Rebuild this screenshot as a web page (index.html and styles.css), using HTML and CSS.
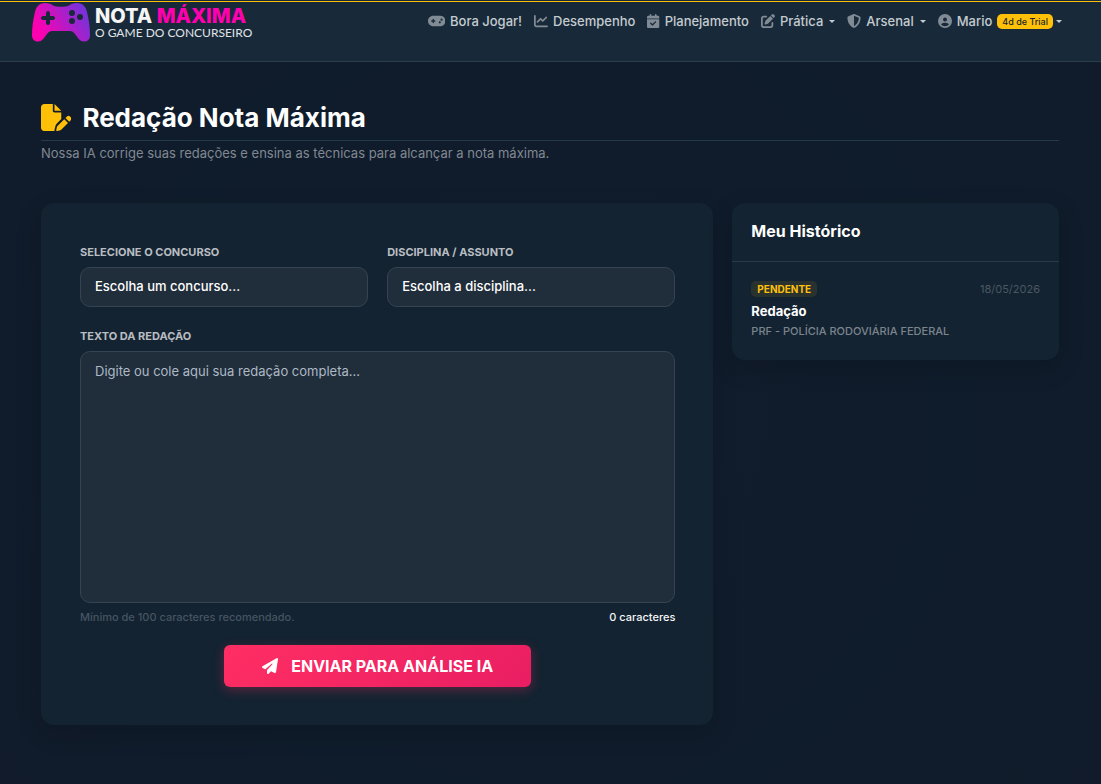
FILE: index.html
```html
<!DOCTYPE html>
<html lang="pt-BR">
<head>
  <meta charset="UTF-8">
  <meta name="viewport" content="width=device-width, initial-scale=1">
  <title>Redação Nota Máxima</title>
  <link rel="stylesheet" href="styles.css">
</head>
<body>

  <header class="navbar">
    <a class="brand" href="#">
      <svg class="brand-icon" viewBox="0 0 58 39" aria-hidden="true">
        <defs>
          <linearGradient id="logoGrad" x1="0" y1="0.7" x2="1" y2="0.3">
            <stop offset="0.1" stop-color="#ff00b0"/>
            <stop offset="1" stop-color="#6f35dc"/>
          </linearGradient>
        </defs>
        <path fill="url(#logoGrad)" d="M13 0C17 0 19 1 22 3C24 4 34 4 36 3C39 1 41 0 45 0C51 0 54 4 55 9C57 17 58 25 58 32C58 36 56 38.500 52 38.500C48 38.500 46 35 43 31C41.500 29 40 28 38 28H20C18 28 16.500 29 15 31C12 35 10 38.500 6 38.500C2 38.500 0 36 0 32C0 25 1 17 3 9C4 4 7 0 13 0Z"/>
        <g fill="#182a39">
          <path d="M14.500 10a1.500 1.500 0 0 1 3 0V13.500h3.500a1.500 1.500 0 0 1 0 3h-3.500v3.500a1.500 1.500 0 0 1-3 0v-3.500h-3.500a1.500 1.500 0 0 1 0-3h3.500z" stroke="#182a39"/>
          <circle cx="40" cy="10" r="3"/>
          <circle cx="40" cy="18" r="3"/>
          <circle cx="48" cy="14" r="3"/>
        </g>
      </svg>
      <span class="brand-text">
        <span class="brand-name">NOTA <span class="pink">MÁXIMA</span></span>
        <span class="brand-sub">O GAME DO CONCURSEIRO</span>
      </span>
    </a>

    <nav class="nav">
      <a class="nav-link" href="#">
        <svg class="icon" viewBox="0 0 640 512"><path d="M192 64C86 64 0 150 0 256S86 448 192 448H448c106 0 192-86 192-192s-86-192-192-192H192zM496 168a40 40 0 1 1 0 80 40 40 0 1 1 0-80zM392 304a40 40 0 1 1 80 0 40 40 0 1 1 -80 0zM168 200c0-13.3 10.7-24 24-24s24 10.7 24 24v32h32c13.3 0 24 10.7 24 24s-10.7 24-24 24H216v32c0 13.3-10.7 24-24 24s-24-10.7-24-24V280H136c-13.3 0-24-10.7-24-24s10.7-24 24-24h32V200z"/></svg>
        Bora Jogar!
      </a>
      <a class="nav-link" href="#">
        <svg class="icon" viewBox="0 0 512 512"><path d="M64 64c0-17.7-14.3-32-32-32S0 46.3 0 64V400c0 44.2 35.8 80 80 80H480c17.7 0 32-14.3 32-32s-14.3-32-32-32H80c-8.8 0-16-7.2-16-16V64zm406.6 86.6c12.5-12.5 12.5-32.8 0-45.3s-32.8-12.5-45.3 0L320 210.7l-57.4-57.4c-12.5-12.5-32.8-12.5-45.3 0l-112 112c-12.5 12.5-12.5 32.8 0 45.3s32.8 12.5 45.3 0L240 221.3l57.4 57.4c12.5 12.5 32.8 12.5 45.3 0l128-128z"/></svg>
        Desempenho
      </a>
      <a class="nav-link" href="#">
        <svg class="icon" viewBox="0 0 448 512"><path d="M128 0c17.7 0 32 14.3 32 32V64H288V32c0-17.7 14.3-32 32-32s32 14.3 32 32V64h48c26.5 0 48 21.5 48 48v48H0V112C0 85.5 21.5 64 48 64H96V32c0-17.7 14.3-32 32-32zM0 192H448V464c0 26.5-21.5 48-48 48H48c-26.5 0-48-21.5-48-48V192zM329 305c9.4-9.4 9.4-24.6 0-33.9s-24.6-9.4-33.9 0l-95 95-47-47c-9.4-9.4-24.6-9.4-33.9 0s-9.4 24.6 0 33.9l64 64c9.4 9.4 24.6 9.4 33.9 0L329 305z"/></svg>
        Planejamento
      </a>
      <a class="nav-link dropdown" href="#">
        <svg class="icon" viewBox="0 0 512 512"><path d="M471.6 21.7c-21.9-21.9-57.3-21.9-79.2 0L362.3 51.7l97.9 97.9 30.1-30.1c21.9-21.9 21.9-57.3 0-79.2L471.6 21.7zm-299.2 220c-6.1 6.1-10.8 13.6-13.5 21.9l-29.6 88.8c-2.9 8.6-.6 18.1 5.8 24.6s15.9 8.7 24.6 5.8l88.8-29.6c8.2-2.7 15.7-7.4 21.9-13.5L437.7 172.3 339.7 74.3 172.4 241.7zM96 64C43 64 0 107 0 160V416c0 53 43 96 96 96H352c53 0 96-43 96-96V320c0-17.7-14.3-32-32-32s-32 14.3-32 32v96c0 17.7-14.3 32-32 32H96c-17.7 0-32-14.3-32-32V160c0-17.7 14.3-32 32-32h96c17.7 0 32-14.3 32-32s-14.3-32-32-32H96z"/></svg>
        Prática
      </a>
      <a class="nav-link dropdown" href="#">
        <svg class="icon" viewBox="0 0 512 512"><path d="M256 0c4.6 0 9.2 1 13.4 2.9L457.7 82.8c22 9.3 38.4 31 38.3 57.2c-.5 99.2-41.3 280.7-213.6 363.2c-16.7 8-36.1 8-52.8 0C57.3 420.7 16.5 239.2 16 140c-.1-26.2 16.3-47.9 38.3-57.2L242.7 2.9C246.8 1 251.4 0 256 0zm0 66.8V444.8C394 378 431.1 230.1 432 141.4L256 66.8l0 0z"/></svg>
        Arsenal
      </a>
      <a class="nav-link dropdown user" href="#">
        <svg class="icon" viewBox="0 0 512 512"><path d="M399 384.2C376.9 345.8 335.4 320 288 320H224c-47.4 0-88.9 25.8-111 64.2c35.2 39.2 86.2 63.8 143 63.8s107.8-24.7 143-63.8zM0 256a256 256 0 1 1 512 0A256 256 0 1 1 0 256zm256 16a72 72 0 1 0 0-144 72 72 0 1 0 0 144z"/></svg>
        Mario <span class="trial">4d de Trial</span>
      </a>
    </nav>
  </header>

  <main class="container">
    <div class="page-header">
      <h1>
        <svg class="title-icon" viewBox="0 0 576 512" aria-hidden="true"><path d="M0 64C0 28.7 28.7 0 64 0H224V128c0 17.7 14.3 32 32 32H384V285.7l-86.8 86.8c-10.3 10.3-17.5 23.1-21 37.2l-18.7 74.9c-2.3 9.2-1.8 18.8 1.3 27.5H64c-35.3 0-64-28.7-64-64V64zm384 64H256V0L384 128zM549.8 235.7l14.4 14.4c15.6 15.6 15.6 40.9 0 56.600l-29.4 29.4-71-71 29.4-29.4c15.6-15.6 40.9-15.6 56.6 0zM311.9 417L441.1 287.8l71 71L382.9 487.9c-4.1 4.1-9.2 7-14.9 8.4l-60.1 15c-5.5 1.4-11.2-.2-15.2-4.2s-5.6-9.7-4.2-15.2l15-60.1c1.4-5.6 4.3-10.8 8.4-14.9z"/></svg>
        Redação Nota Máxima
      </h1>
    </div>
    <p class="subtitle">Nossa IA corrige suas redações e ensina as técnicas para alcançar a nota máxima.</p>

    <div class="row">
      <form class="card form-card">
        <div class="fields">
          <div class="field">
            <label for="concurso">Selecione o concurso</label>
            <select id="concurso">
              <option>Escolha um concurso...</option>
            </select>
          </div>
          <div class="field">
            <label for="disciplina">Disciplina / Assunto</label>
            <select id="disciplina">
              <option>Escolha a disciplina...</option>
            </select>
          </div>
        </div>

        <div class="field">
          <label for="texto">Texto da redação</label>
          <textarea id="texto" placeholder="Digite ou cole aqui sua redação completa..."></textarea>
          <div class="hint">
            <span>Mínimo de 100 caracteres recomendado.</span>
            <span class="count"><span id="contador">0</span> caracteres</span>
          </div>
        </div>

        <button class="btn-send" type="button">
          <svg class="send-icon" viewBox="0 0 512 512" aria-hidden="true"><path d="M498.1 5.6c10.1 7 15.4 19.1 13.5 31.2l-64 416c-1.5 9.7-7.4 18.2-16 23s-18.9 5.4-28 1.6L284 427.7l-68.5 74.1c-8.9 9.7-22.9 12.9-35.2 8.1S160 493.2 160 480V396.4c0-4 1.5-7.8 4.2-10.7L331.8 202.8c5.8-6.3 5.6-16-.4-22s-15.7-6.4-22-.7L106 360.8 17.7 316.6C7.1 311.3 .3 300.7 0 288.9s5.9-22.8 16.1-28.7l448-256c10.7-6.1 23.9-5.5 34 1.4z"/></svg>
          ENVIAR PARA ANÁLISE IA
        </button>
      </form>

      <aside class="card history">
        <h2>Meu Histórico</h2>
        <a class="history-item" href="#">
          <span class="history-top">
            <span class="status">PENDENTE</span>
            <span class="date">18/05/2026</span>
          </span>
          <span class="history-title">Redação</span>
          <span class="history-sub">PRF - POLÍCIA RODOVIÁRIA FEDERAL</span>
        </a>
      </aside>
    </div>
  </main>

  <script>
    const texto = document.getElementById("texto");
    texto.addEventListener("input", () => {
      document.getElementById("contador").textContent = texto.value.length;
    });
  </script>

</body>
</html>
```
FILE: styles.css
```css
* { box-sizing: border-box; }
body {
  margin: 0;
  min-height: 100vh;
  font-family: Inter, sans-serif;
  font-size: 13px;
  line-height: 20px;
  color: #fff;
  background: radial-gradient(circle at 50% 52%, #121c2d 0, #0f1c2b 60%, #111b2b 100%);
}
a { color: inherit; text-decoration: none; }

/* navbar */
.navbar {
  display: flex;
  justify-content: space-between;
  align-items: flex-start;
  height: 62px;
  padding: 0 39px 0 32px;
  background: linear-gradient(#ffc107, #ffc107) 0 1px / 100% 1px no-repeat #182a39;
  border-bottom: 1px solid #2a3e4e;
}
.brand { display: flex; gap: 5px; padding-top: 3px; }
.brand-icon { width: 58px; height: 39px; }
.brand-text { display: flex; flex-direction: column; padding-top: 1px; }
.brand-name { font-size: 20px; font-weight: 800; line-height: 24px; color: #f5f5f5; }
.pink { color: #ff00b0; }
.brand-sub { font-family: Lato, sans-serif; font-size: 12px; line-height: 10px; color: #e0e4e8; }

.nav { display: flex; gap: 12px; padding-top: 11px; }
.nav-link { display: flex; align-items: center; gap: 5px; font-weight: 500; color: #c5cad0; white-space: nowrap; }
.icon { height: 14px; fill: #818b95; }
.dropdown::after {
  content: "";
  margin-left: 1px;
  border-top: 3px solid #c5cad0;
  border-left: 3px solid transparent;
  border-right: 3px solid transparent;
}
.user::after { margin-left: -2px; }
.trial {
  padding: 0 5px;
  border-radius: 5px;
  background: #ffc107;
  color: #212529;
  font-size: 9px;
  font-weight: 500;
  line-height: 15px;
}

/* page */
.container { padding: 38px 42px 59px 41px; }
.page-header { border-bottom: 1px solid #24394a; padding-bottom: 5px; }
h1 { display: flex; align-items: center; gap: 11px; margin: 0; font-size: 26px; font-weight: 700; line-height: 35px; }
.title-icon { height: 27px; fill: #ffc107; }
.subtitle { margin: 2px 0 40px; color: #818892; }

.row { display: grid; grid-template-columns: repeat(12, 1fr); gap: 19px; align-items: start; }
.card { background: #132331; border-radius: 13px; box-shadow: 0 8px 26px rgba(0, 0, 0, 0.15); }
.form-card { grid-column: span 8; padding: 39px 38px 38px 39px; }
.fields { display: grid; grid-template-columns: 1fr 1fr; gap: 19px; margin-bottom: 19px; }
label { display: block; margin-bottom: 5px; font-size: 11px; font-weight: 700; color: #b9bdc2; text-transform: uppercase; }
select, textarea {
  display: block;
  width: 100%;
  padding: 9px 14px;
  border: 1px solid #364350;
  border-radius: 10px;
  background: #202d3b;
  color: #fff;
  font: inherit;
  font-weight: 500;
}
select { height: 40px; padding: 8px 14px 10px; appearance: none; }
textarea { height: 252px; font-weight: 400; resize: none; }
textarea::placeholder { color: #adb9c5; }
.hint { display: flex; justify-content: space-between; margin-top: 4px; font-size: 11px; font-weight: 500; color: #475461; }
.count { color: #f5f6f7; }
.btn-send {
  display: flex;
  align-items: center;
  justify-content: center;
  gap: 13px;
  height: 42px;
  margin: 18px auto 0;
  padding: 0 38px;
  border: 0;
  border-radius: 6px;
  background: linear-gradient(135deg, #ff2e63, #e91e63);
  box-shadow: 0 3px 12px rgba(255, 46, 99, 0.3);
  color: #fff;
  font: inherit;
  font-size: 16px;
  font-weight: 700;
  cursor: pointer;
}
.send-icon { height: 16px; fill: #fff; }

/* history */
.history { grid-column: span 4; }
h2 { margin: 0; padding: 18px 19px 20px; border-bottom: 1px solid #2a3947; font-size: 16px; font-weight: 700; line-height: 20px; }
.history-item { display: flex; flex-direction: column; padding: 17px 19px 19px; }
.history-top { display: flex; justify-content: space-between; align-items: center; }
.status { padding: 0 6px; border-radius: 5px; background: #2a3230; color: #ffc107; font-size: 10px; font-weight: 700; line-height: 16px; }
.date { font-size: 11px; color: #4b5763; }
.history-title { margin-top: 2px; font-weight: 700; }
.history-sub { font-size: 11px; font-weight: 500; color: #7c858e; }
```
